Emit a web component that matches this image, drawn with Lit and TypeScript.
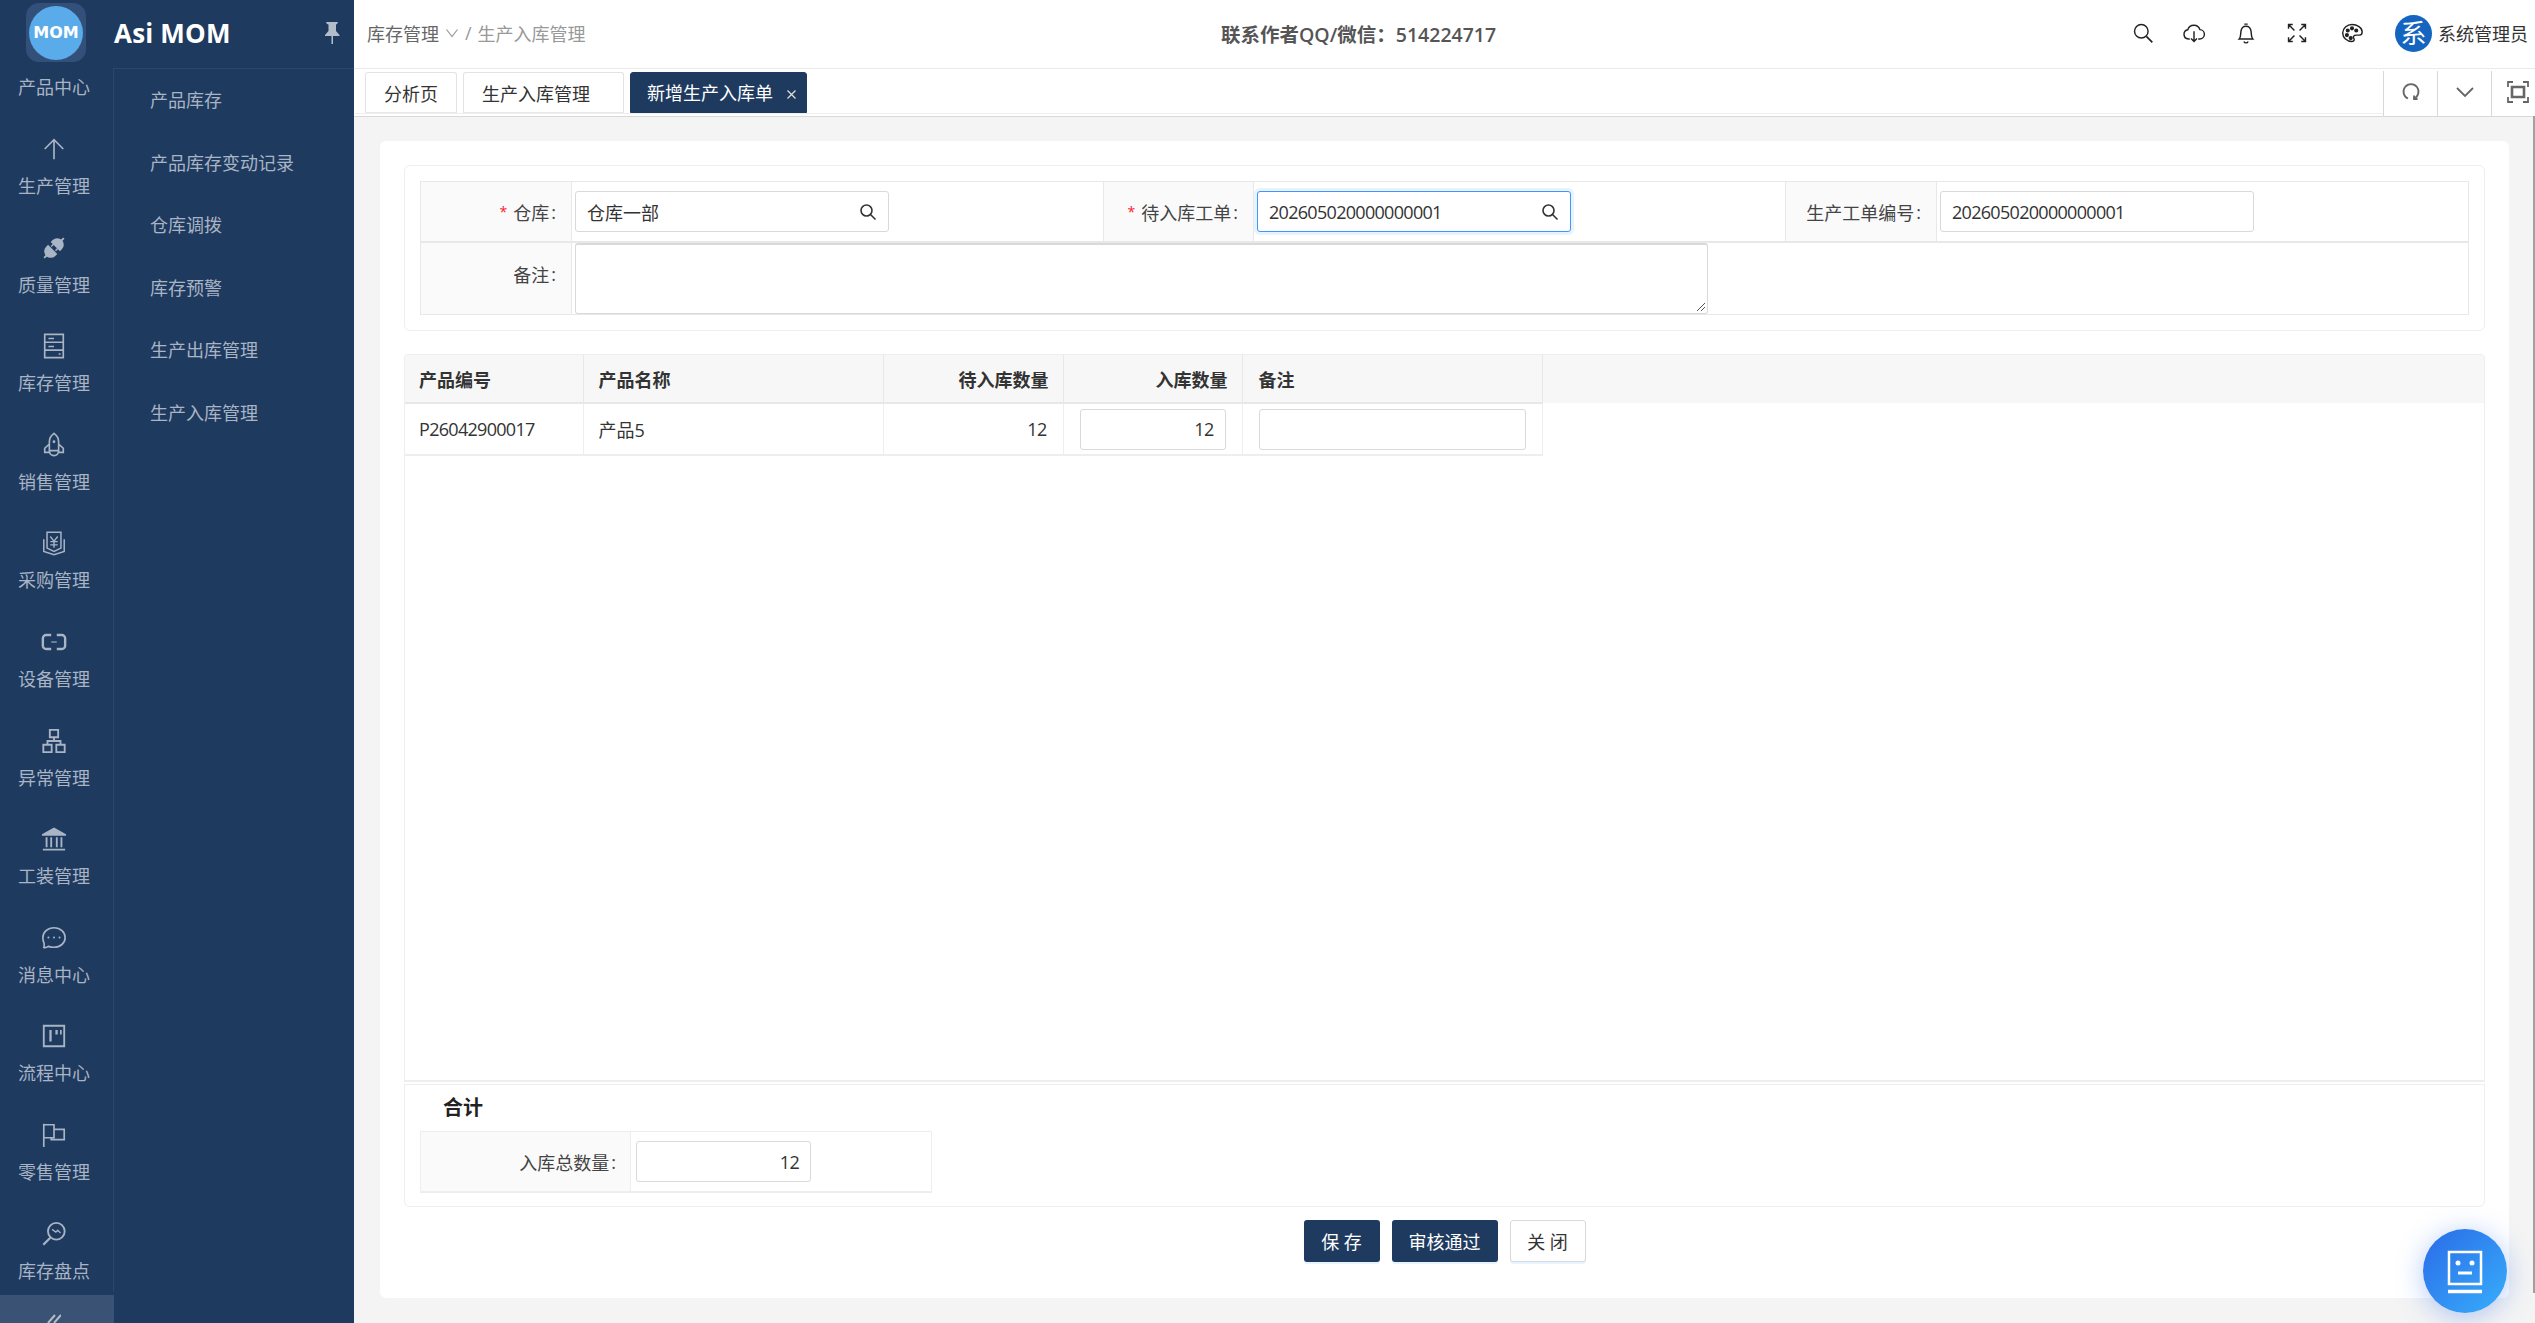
import { LitElement, html, css, svg } from "lit";
import { customElement } from "lit/decorators.js";

const railIcons: Record<string, unknown> = {
  up: svg`<path d="M14 4v21M4 14 14 4l10 10" fill="none"/>`,
  plug: svg`<g transform="rotate(-45 14 14)" stroke="none" fill="currentColor"><path d="M-1 13h4v2h-4zM25 13h4v2h-4z"/><path d="M12 7v14H9a7 7 0 0 1 0-14z"/><path d="M16 7h3a7 7 0 0 1 0 14h-3v-3h-3v-1.500h3v-5h-3V10h3z"/></g>`,
  box: svg`<path d="M4 1.500h20v25H4zM4 10h20M4 18.500h20" fill="none"/><path d="M8 6h6M8 14.500h6M19 22.500h2" fill="none" stroke-width="1.600"/>`,
  rocket: svg`<path d="M14 1.500c3.500 2.500 5 5.500 5 9V20H9v-9.500c0-3.500 1.500-6.500 5-9zM9 13l-5 4.500v4.500h5M19 13l5 4.500v4.500h-5M9 20c0 3 2 5.500 5 5.500s5-2.500 5-5.500" fill="none"/><circle cx="14" cy="10.500" r="1.500" stroke="none" fill="currentColor"/>`,
  yen: svg`<path d="M6.500 2.500h15v17L14 23l-7.500-3.500z" fill="none" stroke-width="1.600"/><path d="M3 10v13l11 3.500L25 23V10" fill="none" stroke-width="1.600"/><path d="M10 7l4 5 4-5M10 12.500h8M10 16h8M14 12v7" fill="none" stroke-width="1.500"/>`,
  link: svg`<path d="M11 6.500H5.500A3.500 3.500 0 0 0 2 10v8a3.500 3.500 0 0 0 3.500 3.500H11M17 6.500h5.500A3.500 3.500 0 0 1 26 10v8a3.500 3.500 0 0 1-3.500 3.500H17" fill="none" stroke-width="2.600"/><path d="M11 14h6" fill="none" stroke-width="1.200"/>`,
  tree: svg`<path d="M9.500 2h9v8h-9zM2.500 18h9v8h-9zM16.500 18h9v8h-9zM14 10v4M7 18v-4h14v4" fill="none" stroke-width="2"/>`,
  bank: svg`<path d="M14 1.500 27 9v1.500H1V9zM2 24.500h24v1.800H2z" stroke="none" fill="currentColor"/><path d="M6 12v11M11 12v11M17 12v11M22 12v11" fill="none" stroke-width="2"/>`,
  chat: svg`<path d="M14 3c6.800 0 12 4.500 12 10.500S20.800 24 14 24c-2 0-4-.2-6-1-2 1.300-4 1.500-5 1.200 .6-1.500.5-3 .3-4.500C2.400 18 2 15.800 2 13.500 2 7.500 7.200 3 14 3z" fill="none"/><circle cx="8" cy="13.500" r="1.100" stroke="none" fill="currentColor"/><circle cx="14" cy="13.500" r="1.100" stroke="none" fill="currentColor"/><circle cx="20" cy="13.500" r="1.100" stroke="none" fill="currentColor"/>`,
  board: svg`<path d="M3 3h22v22H3z" fill="none" stroke-width="2"/><path d="M9 7.500h2.500V20H9zM15.500 7.500H18v5h-2.500zM20.500 7.500h1.800v5h-1.800z" stroke="none" fill="currentColor"/>`,
  flag: svg`<path d="M3 2v25M3 3h11v14H3M14 8h11v11H11v-2" fill="none" stroke-width="1.800"/>`,
  scan: svg`<circle cx="16.500" cy="11" r="9" fill="none" stroke-width="2"/><path d="M10 18 2.500 25.500" fill="none" stroke-width="2.400"/><path d="M12 9l4 3 2-2 3 3" fill="none" stroke-width="1.400"/>`,
};

const railItems: [string, string][] = [
  ["up", "生产管理"], ["plug", "质量管理"], ["box", "库存管理"], ["rocket", "销售管理"],
  ["yen", "采购管理"], ["link", "设备管理"], ["tree", "异常管理"], ["bank", "工装管理"],
  ["chat", "消息中心"], ["board", "流程中心"], ["flag", "零售管理"], ["scan", "库存盘点"],
];
const subItems = ["产品库存", "产品库存变动记录", "仓库调拨", "库存预警", "生产出库管理", "生产入库管理"];

const searchIcon = html`<svg class="in-ico" viewBox="0 0 18 18"><circle cx="7.500" cy="7.500" r="5.500"/><path d="m11.500 11.500 5 5"/></svg>`;

@customElement("app-root")
export class AppRoot extends LitElement {
  static styles = css`
    :host { display: block; height: 100vh; overflow: hidden; position: relative;
      font-family: "Open Sans", "Noto Sans CJK SC", sans-serif; font-size: 18px; color: #333; }
    * { box-sizing: border-box; }
    .app { display: flex; height: 100%; background: #f4f4f4; }
    .side { width: 354px; flex: none; background: #1e3a5f; display: flex; color: #a9b4c4; }
    .rail { width: 114px; flex: none; display: flex; flex-direction: column; align-items: center; position: relative; padding: 3px 6px 0 0; }
    .rail::after { content: ""; position: absolute; right: 0; top: 68px; bottom: 31px; width: 1px; background: #2c4769; }
    .logo { width: 60px; height: 59px; border-radius: 13px; background: #32507a; margin-left: 4px; display: flex; align-items: center; justify-content: center; }
    .logo-c { width: 54px; height: 54px; border-radius: 50%; background: #5aabea; color: #fff; font-weight: 700; font-size: 16px; line-height: 54px; text-align: center; font-family: "DejaVu Sans", sans-serif; }
    .rail-first { line-height: 26px; margin: 12px 0 35px; }
    .rail-list { display: flex; flex-direction: column; gap: 34.600px; }
    .rail-item { display: flex; flex-direction: column; align-items: center; gap: 10px; height: 64px; }
    .rail-item svg { width: 26px; height: 28px; stroke: currentColor; stroke-width: 1.800; overflow: visible; }
    .rail-item span { line-height: 26px; }
    .collapse { position: absolute; left: 0; right: 0; bottom: 0; height: 28px; background: #3a5375; display: flex; justify-content: center; padding-right: 6px; }
    .collapse svg { width: 14px; height: 28px; fill: none; stroke: #b4bdca; stroke-width: 2; margin-top: 19px; }
    .sub { flex: 1; display: flex; flex-direction: column; }
    .brand { height: 69px; padding: 0 14px 3px 0; display: flex; align-items: center; justify-content: space-between; border-bottom: 1px solid #2c4769; }
    .brand b { color: #fff; font-size: 26px; font-weight: 700; letter-spacing: 0.200px; }
    .brand svg { width: 16px; height: 24px; fill: #b4bdca; }
    .sub-list { padding-left: 36px; }
    .sub-list div { height: 62.600px; line-height: 62.600px; }
    .main { flex: 1; min-width: 0; display: flex; flex-direction: column; }
    .top { height: 69px; flex: none; background: #fff; border-bottom: 1px solid #eaeaea; display: flex; align-items: center; padding: 0 7px 2px 13px; }
    .crumb { width: 854px; flex: none; color: #999; display: flex; align-items: center; gap: 6px; }
    .crumb .a { color: #666; }
    .crumb svg { width: 14px; height: 10px; fill: none; stroke: #999; stroke-width: 1.200; }
    .notice { color: #555; font-weight: 600; font-size: 19.500px; }
    .tools { flex: 1; display: flex; align-items: center; justify-content: flex-end; }
    .tool { width: 22px; height: 22px; fill: none; stroke: #222; stroke-width: 1.700; margin-right: 29.500px; flex: none; }
    .tool.wide { margin-right: 33px; }
    .tool.last { margin-right: 32px; }
    .avatar { width: 37px; height: 37px; border-radius: 50%; background: #1565c0; color: #fff; font-size: 26px; line-height: 37px; text-align: center; margin-right: 6px; }
    .tabs { height: 48px; flex: none; background: #fff; display: flex; align-items: stretch; border-bottom: 1px solid #d9d9d9; padding-left: 1px; position: relative; }
    .tab-line { flex: 1; display: flex; gap: 6px; padding: 3px 0 0 10px; height: 45px; border-bottom: 1px solid #eee; }
    .tab { height: 41px; line-height: 42px; border: 1px solid #e3e3e3; border-bottom-color: #e8e8e8; border-radius: 3px 3px 0 0; padding: 0 18px; color: #333; }
    .tab.t2 { width: 161px; }
    .tab.on { background: #1e3a5f; border-color: #1e3a5f; color: #fff; width: 177px; padding: 1px 0 0 16px; display: flex; align-items: center; gap: 13px; }
    .tab.on svg { width: 11px; height: 11px; stroke: #ddd; stroke-width: 1.300; fill: none; margin-top: 3px; }
    .tab-tool { width: 54px; flex: none; border-left: 1px solid #d8d8d8; margin-top: 2px; display: flex; align-items: center; justify-content: center; padding-bottom: 4px; }
    .tab-tool svg { width: 22px; height: 22px; fill: none; stroke: #666; stroke-width: 1.800; }
    .tab-tool.last { width: 44px; padding-left: 9px; }
    .content { flex: 1; min-height: 0; padding: 24px 26px 25px; }
    .card { height: 100%; background: #fff; border-radius: 6px; padding: 24px 24px 36px; display: flex; flex-direction: column; }
    .box { border: 1px solid #eee; border-radius: 6px; }
    .form-box { padding: 15px 15px 15px; flex: none; height: 166px; }
    .ftable { display: grid; grid-template-columns: 151px 532px 150px 532px 151px 1fr; border: 1px solid #e8e8e8; }
    .lbl { background: #fafafa; display: flex; align-items: center; justify-content: flex-end; padding-right: 15px; border-right: 1px solid #e8e8e8; color: #444; }
    .lbl i { color: #f5222d; font-style: normal; margin-right: 6px; font-size: 14px; }
    .colon { margin-left: 2px; }
    .val { padding: 0 3px; display: flex; align-items: center; border-right: 1px solid #e8e8e8; }
    .row1 { height: 61px; border-bottom: 2px solid #e8e8e8; }
    .row1.end { border-right: 0; }
    .row2 { height: 71px; }
    .lbl.row2 { padding-bottom: 9px; }
    .span { grid-column: span 5; border-right: 0; padding-top: 0; align-items: flex-start; }
    .field { height: 41px; width: 314px; border: 1px solid #d9d9d9; border-radius: 3px; background: #fff; display: flex; align-items: center; justify-content: space-between; padding: 0 11px; color: #333; white-space: nowrap; }
    .num { letter-spacing: -0.700px; }
    .field.focus { border-color: #4096ff; box-shadow: 0 0 0 3px rgba(24, 144, 255, 0.1); }
    .in-ico { width: 18px; height: 18px; fill: none; stroke: #333; stroke-width: 1.600; flex: none; }
    .area { width: 1133px; height: 71px; border: 1px solid #d9d9d9; border-top-width: 2px; border-radius: 3px; position: relative; background: #fff; }
    .area svg { position: absolute; right: 1px; bottom: 1px; width: 12px; height: 12px; stroke: #555; fill: none; }
    .tbox { flex: 1; min-height: 0; margin-top: 23px; border: 1px solid #eee; border-bottom-width: 2px; border-radius: 4px 4px 0 0; }
    table { width: 100%; border-collapse: collapse; table-layout: fixed; }
    th { height: 48px; background: #f7f7f7; font-weight: 700; text-align: left; padding: 0 14px; border-right: 1px solid #e8e8e8; border-bottom: 2px solid #e8e8e8; color: #333; }
    th:nth-child(2), td:nth-child(2) { padding-left: 15px; }
    th:nth-child(5) { padding-left: 16px; }
    th:last-child { border-right: 0; border-bottom: 0; }
    td { height: 52px; padding: 0 14px; border-right: 1px solid #eee; border-bottom: 2px solid #eee; }
    td:last-child { border: 0; }
    .r { text-align: right; }
    td.r { padding-right: 16px; }
    td.pad { padding: 0 16px; }
    td .field { height: 41px; width: 100%; }
    td .field.right { justify-content: flex-end; }
    .sum { flex: none; height: 123px; margin-top: 2px; border-radius: 0 0 6px 6px; padding: 0 15px; }
    .sum h3 { margin: 0; padding-left: 23px; font-size: 20px; font-weight: 700; height: 46px; line-height: 46px; color: #222; }
    .sum-t { display: grid; grid-template-columns: 210px 1fr; width: 512px; height: 62px; border: 1px solid #eee; border-bottom-width: 2px; }
    .sum-t .lbl { padding-right: 14px; border-right-color: #eee; }
    .sum-t .val { padding: 0 5px; border: 0; }
    .sum-t .field { width: 175px; justify-content: flex-end; }
    .actions { flex: none; margin-top: 13px; display: flex; justify-content: center; gap: 12px; }
    .btn { height: 42px; padding: 0 17px; border-radius: 3px; background: #1e3a5f; color: #fff; border: 0; font: inherit; box-shadow: 0 2px 0 rgba(24,144,255,.1); }
    .btn.w { width: 76px; padding: 0; }
    .btn.def { background: #fff; color: #333; border: 1px solid #d9d9d9; }
    .scroll { position: absolute; right: 0; top: 116px; width: 2px; height: 1177px; background: #a0a0a0; }
    .fab { position: absolute; left: 2423px; top: 1229px; width: 84px; height: 84px; border-radius: 50%; background: linear-gradient(135deg, #2a6be8, #38aefb); box-shadow: 0 4px 28px rgba(42, 107, 232, 0.35); display: flex; align-items: center; justify-content: center; }
    .fab svg { width: 36px; height: 44px; fill: none; stroke: #fff; stroke-width: 2.500; margin-top: 2px; }
  `;

  render() {
    return html`<div class="app">
      <aside class="side">
        <div class="rail">
          <div class="logo"><div class="logo-c">MOM</div></div>
          <div class="rail-first">产品中心</div>
          <div class="rail-list">
            ${railItems.map(([k, t]) => html`<div class="rail-item"><svg viewBox="0 0 28 28">${railIcons[k]}</svg><span>${t}</span></div>`)}
          </div>
          <div class="collapse"><svg viewBox="0 0 14 28"><path d="M8 1 1 9M14 1 7 9"/></svg></div>
        </div>
        <div class="sub">
          <div class="brand"><b>Asi MOM</b>
            <svg viewBox="0 0 16 24"><path d="M2 1h12l-1 2-1 .5V10l3.500 4v1H9v8H7.500v-8H1v-1l3.500-4V3.500L3 3z"/></svg>
          </div>
          <div class="sub-list">${subItems.map((s) => html`<div>${s}</div>`)}</div>
        </div>
      </aside>
      <div class="main">
        <header class="top">
          <div class="crumb"><span class="a">库存管理</span><svg viewBox="0 0 14 10"><path d="m1.500 1.500 5.500 7 5.500-7"/></svg><span>/</span><span>生产入库管理</span></div>
          <div class="notice">联系作者QQ/微信：514224717</div>
          <div class="tools">
            <svg class="tool" viewBox="0 0 26 26"><circle cx="11" cy="11" r="8"/><path d="m17 17 7 7" stroke-width="2"/></svg>
            <svg class="tool" viewBox="0 0 26 26"><path d="M8 20H6.500a5.500 5.500 0 0 1-.8-10.900A7.500 7.500 0 0 1 20 9a5.500 5.500 0 0 1-.5 11H18M13 11v12M9.500 19.500 13 23l3.500-3.500"/></svg>
            <svg class="tool" viewBox="0 0 26 26"><path d="M5 20c2-2 1.500-5 2-9 .5-3.500 3-6 6-6s5.500 2.500 6 6c.5 4 0 7 2 9zM11 2.500h4M10.500 23a2.700 2.700 0 0 0 5 0"/></svg>
            <svg class="tool wide" viewBox="0 0 26 26"><path d="M3 3l7 7M23 3l-7 7M3 23l7-7M23 23l-7-7M3 8V3h5M18 3h5v5M3 18v5h5M23 18v5h-5"/></svg>
            <svg class="tool last" viewBox="0 0 26 26"><path d="M13 3C7 3 2 7.500 2 13s5 10 11 10c3 0 3-2.500 2-4s0-3.500 3-3.500h4c2 0 3-1.500 3-4C25 6.500 19 3 13 3z"/><circle cx="8" cy="10" r="1.600" fill="#222"/><circle cx="13" cy="7.500" r="1.600" fill="#222"/><circle cx="18" cy="10" r="1.600" fill="#222"/><circle cx="7" cy="15.500" r="1.600" fill="#222"/><circle cx="11.500" cy="19" r="1.600" fill="#222"/></svg>
            <div class="avatar">系</div><span>系统管理员</span>
          </div>
        </header>
        <nav class="tabs">
          <div class="tab-line">
            <div class="tab">分析页</div>
            <div class="tab t2">生产入库管理</div>
            <div class="tab on">新增生产入库单<svg viewBox="0 0 11 11"><path d="m1.500 1.500 8 8m0-8-8 8"/></svg></div>
          </div>
          <div class="tab-tool"><svg viewBox="0 0 22 22"><path d="M8 17.500A7.500 7.500 0 1 1 14 17.500M14 14.500v3.500h3.500"/></svg></div>
          <div class="tab-tool"><svg viewBox="0 0 22 22"><path d="m3 7 8 8 8-8"/></svg></div>
          <div class="tab-tool last"><svg viewBox="0 0 22 22"><path d="M1 6V1h5M16 1h5v5M1 16v5h5M16 21h5v-5"/><path d="M5 6h12v10H5z" stroke-width="2.600"/></svg></div>
        </nav>
        <div class="content">
          <div class="card">
            <section class="box form-box">
              <div class="ftable">
                <div class="lbl row1"><i>*</i>仓库<span class="colon">:</span></div>
                <div class="val row1"><div class="field"><span>仓库一部</span>${searchIcon}</div></div>
                <div class="lbl row1"><i>*</i>待入库工单<span class="colon">:</span></div>
                <div class="val row1"><div class="field focus"><span class="num">202605020000000001</span>${searchIcon}</div></div>
                <div class="lbl row1">生产工单编号<span class="colon">:</span></div>
                <div class="val row1 end"><div class="field"><span class="num">202605020000000001</span></div></div>
                <div class="lbl row2">备注<span class="colon">:</span></div>
                <div class="val row2 span"><div class="area"><svg viewBox="0 0 12 12"><path d="M11 3 3 11M11 7l-4 4"/></svg></div></div>
              </div>
            </section>
            <section class="tbox">
              <table>
                <colgroup><col style="width:178px" /><col style="width:300px" /><col style="width:180px" /><col style="width:179px" /><col style="width:300px" /><col /></colgroup>
                <thead><tr><th>产品编号</th><th>产品名称</th><th class="r">待入库数量</th><th class="r">入库数量</th><th>备注</th><th></th></tr></thead>
                <tbody><tr>
                  <td class="num">P26042900017</td><td>产品5</td><td class="r num">12</td>
                  <td class="pad"><div class="field right"><span class="num">12</span></div></td>
                  <td class="pad"><div class="field"></div></td><td></td>
                </tr></tbody>
              </table>
            </section>
            <section class="box sum">
              <h3>合计</h3>
              <div class="sum-t">
                <div class="lbl">入库总数量<span class="colon">:</span></div>
                <div class="val"><div class="field"><span class="num">12</span></div></div>
              </div>
            </section>
            <div class="actions">
              <button class="btn w">保 存</button>
              <button class="btn">审核通过</button>
              <button class="btn w def">关 闭</button>
            </div>
          </div>
        </div>
      </div>
    </div>
    <div class="scroll"></div>
    <div class="fab"><svg viewBox="0 0 36 44"><path d="M2 2h32v32H2z"/><path d="M1 41.500h34" stroke-width="3.500"/><circle cx="11" cy="13" r="2.500" fill="#fff" stroke="none"/><circle cx="25" cy="13" r="2.500" fill="#fff" stroke="none"/><path d="M11 23h14" stroke-width="3"/></svg></div>`;
  }
}
